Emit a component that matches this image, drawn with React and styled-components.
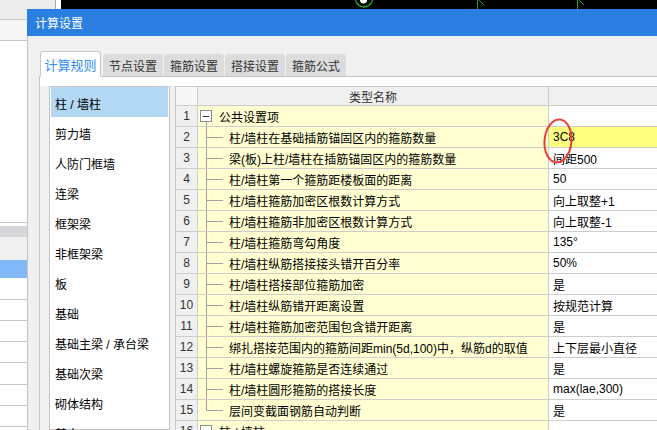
import React from "react";
import styled, { createGlobalStyle } from "styled-components";

const GlobalStyle = createGlobalStyle`
  html, body {
    margin: 0;
    padding: 0;
  }
  body {
    width: 657px;
    height: 430px;
    overflow: hidden;
    background: #f0f0f0;
    font-family: "Liberation Sans", "Noto Sans CJK SC", sans-serif;
    font-size: 12px;
    color: #000;
  }
`;

const Screen = styled.div`
  position: relative;
  width: 657px;
  height: 430px;
  overflow: hidden;
`;

/* ---- application behind the dialog ---- */
const BackApp = styled.div`
  display: flex;
  height: 100%;
  background: #fff;
`;
const SidePane = styled.div`
  width: 55px;
  border-right: 1px solid #a8a8a8;
  display: flex;
  flex-direction: column;
  background: #fff;
`;
const Band = styled.div`
  height: ${(p) => p.h}px;
  background: ${(p) => p.bg || "#fff"};
  border-bottom: ${(p) => (p.line ? "1px solid #c8c8c8" : "none")};
  flex-shrink: 0;
`;
const Gutter = styled.div`
  width: 5px;
  background: #fff;
`;
const Canvas = styled.div`
  flex: 1;
  background: #000;
`;

/* ---- dialog ---- */
const Dialog = styled.div`
  position: absolute;
  left: 27px;
  top: 9px;
  width: 720px;
  bottom: 0;
  display: flex;
  flex-direction: column;
`;
const TitleBar = styled.div`
  height: 27px;
  background: #2b7fe0;
  color: #fff;
  font-size: 12px;
  display: flex;
  align-items: center;
  padding-left: 8px;
  flex-shrink: 0;
`;
const DialogBody = styled.div`
  flex: 1;
  background: #f0f0f0;
  border-left: 1px solid #c4c4c4;
  padding: 15px 0 0 11px;
  display: flex;
  flex-direction: column;
  min-height: 0;
`;
const TabStrip = styled.div`
  display: flex;
  align-items: flex-end;
  padding-left: 1px;
  position: relative;
  z-index: 1;
`;
const ActiveTab = styled.div`
  width: 61px;
  height: 26px;
  box-sizing: border-box;
  background: #fff;
  border: 1px solid #c8c8c8;
  border-bottom: none;
  border-radius: 3px 3px 0 0;
  margin-bottom: -1px;
  color: #2d8cf0;
  font-size: 13px;
  display: flex;
  align-items: center;
  justify-content: center;
`;
const Tab = styled.div`
  width: 60px;
  height: 22px;
  margin-left: ${(p) => (p.first ? 2 : 1)}px;
  background: #dcdcdc;
  border-radius: 3px 3px 0 0;
  color: #333;
  font-size: 12px;
  display: flex;
  align-items: center;
  justify-content: center;
`;
const Panel = styled.div`
  flex: 1;
  border-top: 1px solid #c8c8c8;
  border-left: 1px solid #c8c8c8;
  background: #f0f0f0;
  display: flex;
  flex-direction: column;
  min-height: 0;
`;
const PanelTop = styled.div`
  height: 9px;
  background: #fff;
  flex-shrink: 0;
`;
const Workspace = styled.div`
  flex: 1;
  display: flex;
  gap: 5px;
  padding-left: 9px;
  min-height: 0;
`;

/* ---- category list ---- */
const List = styled.div`
  width: 121px;
  box-sizing: border-box;
  border: 1px solid #c3c3c3;
  background: #fff;
  padding: 0 1px;
  flex-shrink: 0;
`;
const ListItem = styled.div`
  height: 30px;
  padding-left: 4px;
  padding-top: 2px;
  box-sizing: border-box;
  display: flex;
  align-items: center;
  background: ${(p) => (p.selected ? "#b3d8f4" : "transparent")};
  white-space: nowrap;
`;

/* ---- settings table ---- */
const Table = styled.div`
  display: grid;
  grid-template-columns: 22px 351px 150px;
  grid-auto-rows: 21px;
  grid-template-rows: 19px;
  border-top: 1px solid #c8c8c8;
  border-left: 1px solid #c8c8c8;
  align-self: flex-start;
  flex-shrink: 0;
`;
const Cell = styled.div`
  box-sizing: border-box;
  border-right: 1px solid #cdcdcd;
  border-bottom: 1px solid #cdcdcd;
  display: flex;
  align-items: center;
  white-space: nowrap;
  overflow: hidden;
`;
const HeadCell = styled(Cell)`
  background: ${(p) => (p.light ? "#f7f7f7" : "#f0f0f0")};
  justify-content: center;
  color: #333;
`;
const NumCell = styled(Cell)`
  background: #f0f0f0;
  justify-content: center;
  color: #333;
`;
const NameCell = styled(Cell)`
  background: #ffffd2;
`;
const ValueCell = styled(Cell)`
  background: ${(p) => (p.active ? "#ffff80" : "#fff")};
  padding-left: 4px;
`;

const Annotation = styled.svg`
  position: absolute;
  left: 542px;
  top: 116px;
  pointer-events: none;
`;

const categories = [
  "柱 / 墙柱",
  "剪力墙",
  "人防门框墙",
  "连梁",
  "框架梁",
  "非框架梁",
  "板",
  "基础",
  "基础主梁 / 承台梁",
  "基础次梁",
  "砌体结构",
  "其它",
];

const rows = [
  { name: "公共设置项", value: "", group: true },
  { name: "柱/墙柱在基础插筋锚固区内的箍筋数量", value: "3C8", active: true },
  { name: "梁(板)上柱/墙柱在插筋锚固区内的箍筋数量", value: "间距500" },
  { name: "柱/墙柱第一个箍筋距楼板面的距离", value: "50" },
  { name: "柱/墙柱箍筋加密区根数计算方式", value: "向上取整+1" },
  { name: "柱/墙柱箍筋非加密区根数计算方式", value: "向上取整-1" },
  { name: "柱/墙柱箍筋弯勾角度", value: "135°" },
  { name: "柱/墙柱纵筋搭接接头错开百分率", value: "50%" },
  { name: "柱/墙柱搭接部位箍筋加密", value: "是" },
  { name: "柱/墙柱纵筋错开距离设置", value: "按规范计算" },
  { name: "柱/墙柱箍筋加密范围包含错开距离", value: "是" },
  { name: "绑扎搭接范围内的箍筋间距min(5d,100)中，纵筋d的取值", value: "上下层最小直径" },
  { name: "柱/墙柱螺旋箍筋是否连续通过", value: "是" },
  { name: "柱/墙柱圆形箍筋的搭接长度", value: "max(lae,300)" },
  { name: "层间变截面钢筋自动判断", value: "是", last: true },
  { name: "柱 / 墙柱", value: "", group: true },
];

const GroupToggle = () => (
  <svg width="21" height="20" style={{ flexShrink: 0 }}>
    <line x1="8.5" y1="15.5" x2="8.5" y2="20" stroke="#a0a0a0" />
    <rect x="2.5" y="4.5" width="11" height="11" fill="#fff" stroke="#8c8c8c" />
    <line x1="5" y1="10.5" x2="11" y2="10.5" stroke="#333" />
  </svg>
);

const Branch = ({ last }) => (
  <svg width="31" height="20" style={{ flexShrink: 0 }}>
    <line x1="8.5" y1="0" x2="8.5" y2={last ? 10.5 : 20} stroke="#a0a0a0" />
    <line x1="8.5" y1="10.5" x2="25" y2="10.5" stroke="#a0a0a0" />
  </svg>
);

const CanvasDrawing = () => (
  <svg width="596" height="9" style={{ display: "block" }}>
    <circle cx="303" cy="-1.5" r="8.5" fill="none" stroke="#22aa22" strokeWidth="1.3" />
    <path d="M299 0 h7 v1.5 q-1.5 2.5 -4 2 q-3 -0.5 -3 -3.5z" fill="#fff" />
    <line x1="416.5" y1="0" x2="416.5" y2="9" stroke="#22aa22" />
    <line x1="418" y1="0" x2="423" y2="5" stroke="#22aa22" />
    <line x1="516.5" y1="0" x2="516.5" y2="9" stroke="#22aa22" />
    <line x1="518" y1="0" x2="523" y2="5" stroke="#22aa22" />
  </svg>
);

const App = () => {
  return (
    <Screen>
      <GlobalStyle />
      <BackApp>
        <SidePane>
          <Band h={19} bg="#ececec" line />
          <Band h={20} bg="#f7f7f7" line />
          <Band h={181} line />
          <Band h={3} />
          <Band h={11} bg="#d5d6da" />
          <Band h={23} bg="#f0f0f0" />
          <Band h={18} bg="#80b8f8" />
          <Band h={21} line />
          <Band h={20} line />
          <Band h={20} line />
          <Band h={20} line />
          <Band h={21} line />
          <Band h={20} line />
          <Band h={20} line />
        </SidePane>
        <Gutter />
        <Canvas>
          <CanvasDrawing />
        </Canvas>
      </BackApp>

      <Dialog>
        <TitleBar>计算设置</TitleBar>
        <DialogBody>
          <TabStrip>
            <ActiveTab>计算规则</ActiveTab>
            <Tab first>节点设置</Tab>
            <Tab>箍筋设置</Tab>
            <Tab>搭接设置</Tab>
            <Tab>箍筋公式</Tab>
          </TabStrip>
          <Panel>
            <PanelTop />
            <Workspace>
              <List>
                {categories.map((c, i) => (
                  <ListItem key={c} selected={i === 0}>
                    {c}
                  </ListItem>
                ))}
              </List>
              <Table>
                <HeadCell light />
                <HeadCell>类型名称</HeadCell>
                <HeadCell />
                {rows.map((r, i) => (
                  <React.Fragment key={i}>
                    <NumCell>{i + 1}</NumCell>
                    <NameCell>
                      {r.group ? <GroupToggle /> : <Branch last={r.last} />}
                      {r.name}
                    </NameCell>
                    <ValueCell active={r.active}>{r.value}</ValueCell>
                  </React.Fragment>
                ))}
              </Table>
            </Workspace>
          </Panel>
        </DialogBody>
      </Dialog>

      <Annotation width="32" height="50">
        <ellipse
          cx="16"
          cy="25"
          rx="13.5"
          ry="21.5"
          fill="none"
          stroke="#e8403a"
          strokeWidth="2"
          transform="rotate(5 16 25)"
        />
      </Annotation>
    </Screen>
  );
};

export default App;
